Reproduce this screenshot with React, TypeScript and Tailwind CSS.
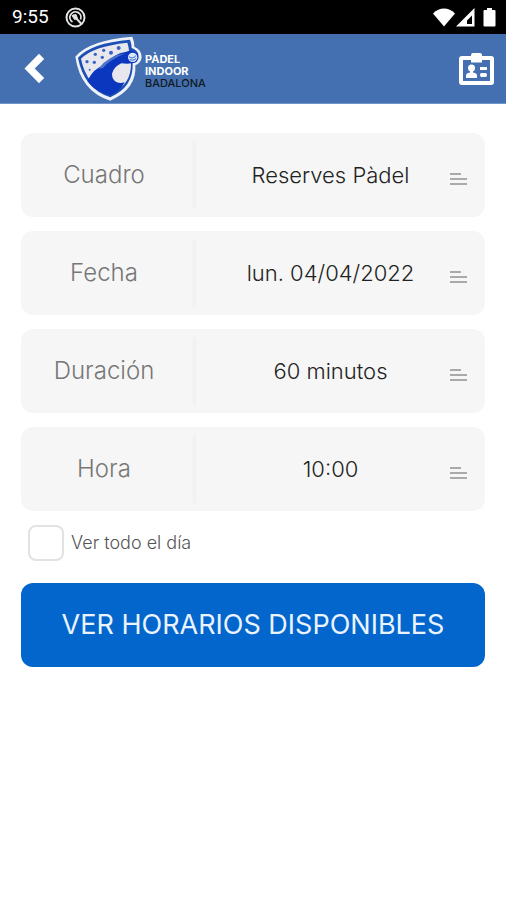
const fields = [
  { id: 'cuadro', label: 'Cuadro', value: 'Reserves Pàdel' },
  { id: 'fecha', label: 'Fecha', value: 'lun. 04/04/2022' },
  { id: 'duracion', label: 'Duración', value: '60 minutos' },
  { id: 'hora', label: 'Hora', value: '10:00' },
]

function StatusBar() {
  return (
    <div className="flex h-[34px] items-center justify-between bg-black pr-[9px] pl-3 text-white">
      <div className="flex items-center gap-4">
        <span className="font-['Roboto',sans-serif] text-[19px] leading-6">9:55</span>
        <svg width="21" height="21" viewBox="0 0 21 21" fill="none" stroke="#e4e4e4">
          <circle cx="10.5" cy="10.5" r="9" strokeWidth="2" />
          <path d="M7.500 15A5.500 5.500 0 1 1 15.500 12.500" strokeWidth="1.800" />
          <path d="M8 8l8.500 9" strokeWidth="2" />
          <path d="M7 8.500l4-1 1.500 4-3 1z" fill="#e4e4e4" strokeWidth="1" />
        </svg>
      </div>
      <svg width="64" height="20" viewBox="0 0 64 20" fill="#fff">
        <path d="M0 6.500C6.500-.2 15.500-.2 22 6.500L11 19.500z" />
        <path fillRule="evenodd" d="M41.500 1v18.500H23zM39 8.500v8.500h-5V13.500z" />
        <path d="M54 1h5v2h2.500q1 0 1 1v14.500q0 1-1 1h-10q-1 0-1-1V4q0-1 1-1H54z" />
      </svg>
    </div>
  )
}

function Logo() {
  return (
    <div className="flex items-center">
      <svg width="72" height="70" viewBox="0 0 216 210">
        <path
          d="M7 68Q48 18 178 8Q184 22 184 38Q205 46 206 70Q204 88 187 94Q192 165 112 200Q22 172 7 68z"
          fill="#eef1f8"
        />
        <path d="M15 71Q54 27 171 17Q176 30 176 42Q197 50 197 69Q196 84 179 88Q182 159 112 190Q32 163 15 71z" fill="#1c4fb4" />
        <path d="M24 74Q60 37 163 26Q167 38 168 50L174 88Q176 152 112 181Q40 156 24 74z" fill="#e8e7ee" />
        <path
          d="M43 141Q62 103 92 94Q120 59 160 53Q178 46 192 58Q200 70 190 84Q172 92 145 88Q122 98 117 119Q117 138 132 145Q142 149 155 145Q141 173 112 184Q64 171 43 141z"
          fill="#0a37bd"
        />
        <path d="M76 105Q104 65 158 58Q112 76 90 102z" fill="#4d74cb" />
        <circle cx="179" cy="70" r="14" fill="#dbe8fa" />
        <path d="M168 68q10 9 21-3M170 77q10 5 19-3" fill="none" stroke="#3167c8" strokeWidth="3" />
        <g fill="#3b63c4">
          <circle cx="42" cy="83" r="5" />
          <circle cx="67" cy="61" r="5" />
          <circle cx="92" cy="49" r="5" />
          <circle cx="137" cy="42" r="6" />
          <circle cx="114" cy="56" r="6" />
          <circle cx="88" cy="70" r="5" />
          <circle cx="64" cy="85" r="5" />
          <circle cx="50" cy="107" r="3" />
        </g>
      </svg>
      <div className="pt-1 text-[11px] leading-3 font-bold text-white">
        <p>PÀDEL</p>
        <p>INDOOR</p>
        <p className="font-medium text-[#101820]">BADALONA</p>
      </div>
    </div>
  )
}

function Header() {
  return (
    <header className="flex h-[70px] items-center border-b border-[#6f94c8] bg-[#4470b1] pr-3 pl-6">
      <button type="button" aria-label="Atrás" className="mr-7">
        <svg width="21" height="31" viewBox="0 0 21 31" fill="#fff">
          <path d="M.5 15.500L15 .8l5.200 5.200-9.500 9.500 9.500 9.500L15 30.200z" />
        </svg>
      </button>
      <Logo />
      <button type="button" aria-label="Carnet" className="ml-auto">
        <svg width="35" height="32" viewBox="0 0 35 32" fill="#fff">
          <path
            fillRule="evenodd"
            d="M3 3h9V2q0-2 2-2h7q2 0 2 2v1h9q3 0 3 3v23q0 3-3 3H3q-3 0-3-3V6q0-3 3-3zM4 7v21h27V7h-8v2.500H12V7z"
          />
          <circle cx="12.500" cy="15" r="3.500" />
          <path d="M11 17h3v2.500q4 .5 4 3V25H7v-2.500q0-2.500 4-3zM21 14h7v3h-7zM22.500 20h4q1.500 0 1.500 2t-1.500 2h-4Q21 24 21 22t1.500-2z" />
        </svg>
      </button>
    </header>
  )
}

function Field({ id, label, value }: { id: string; label: string; value: string }) {
  return (
    <div className="relative flex h-[84px] rounded-xl bg-[#f6f6f6]">
      <label htmlFor={id} className="flex w-3/8 items-center justify-center pr-2 text-2xl font-light text-[#777]">
        {label}
      </label>
      <div className="my-2 -ml-1 w-[5px] bg-linear-to-r from-[#f5f5f5] to-[#f0f0f0]" />
      <select
        id={id}
        className="min-w-0 flex-1 appearance-none bg-transparent pr-5 text-center text-[22px] font-light text-[#222] [text-align-last:center]"
      >
        <option>{value}</option>
      </select>
      <svg
        className="pointer-events-none absolute top-10 right-[18px]"
        width="17"
        height="13"
        viewBox="0 0 17 13"
        fill="#aaa"
      >
        <path d="M0 0h11v2H0zM0 5h17v2H0zM0 10h17v2H0z" />
      </svg>
    </div>
  )
}

export default function App() {
  return (
    <div className="min-h-screen bg-white font-['Inter',sans-serif]">
      <StatusBar />
      <Header />
      <main className="px-[21px] pt-[29px]">
        <form className="flex flex-col gap-[14px]">
          {fields.map((field) => (
            <Field key={field.id} {...field} />
          ))}
          <label className="flex items-center gap-[7px] self-start pl-[7px] text-lg font-light text-[#555]">
            <input
              type="checkbox"
              className="size-9 appearance-none rounded-lg border-2 border-[#e2e2e2] bg-white checked:bg-[#0366cc]"
            />
            Ver todo el día
          </label>
          <button type="button" className="mt-2 h-[84px] rounded-xl bg-[#0366cc] text-[27px] text-[#eaf3ff]">
            VER HORARIOS DISPONIBLES
          </button>
        </form>
      </main>
    </div>
  )
}
